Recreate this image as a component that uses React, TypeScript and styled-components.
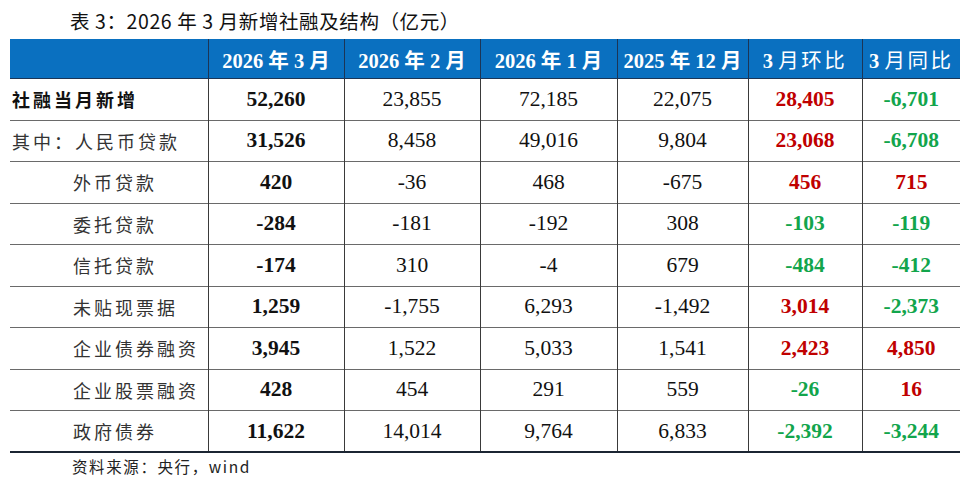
import React from "react";
import styled, { createGlobalStyle } from "styled-components";

const GlobalStyle = createGlobalStyle`
  html, body {
    margin: 0;
    padding: 0;
    background: #ffffff;
  }
`;

type Tone = "red" | "green" | "plain";

type Row = {
  label: string;
  indent?: boolean;
  strong?: boolean;
  values: string[];
  mom: [string, Tone];
  yoy: [string, Tone];
};

const rows: Row[] = [
  { label: "社融当月新增", strong: true, values: ["52,260", "23,855", "72,185", "22,075"], mom: ["28,405", "red"], yoy: ["-6,701", "green"] },
  { label: "其中：人民币贷款", values: ["31,526", "8,458", "49,016", "9,804"], mom: ["23,068", "red"], yoy: ["-6,708", "green"] },
  { label: "外币贷款", indent: true, values: ["420", "-36", "468", "-675"], mom: ["456", "red"], yoy: ["715", "red"] },
  { label: "委托贷款", indent: true, values: ["-284", "-181", "-192", "308"], mom: ["-103", "green"], yoy: ["-119", "green"] },
  { label: "信托贷款", indent: true, values: ["-174", "310", "-4", "679"], mom: ["-484", "green"], yoy: ["-412", "green"] },
  { label: "未贴现票据", indent: true, values: ["1,259", "-1,755", "6,293", "-1,492"], mom: ["3,014", "red"], yoy: ["-2,373", "green"] },
  { label: "企业债券融资", indent: true, values: ["3,945", "1,522", "5,033", "1,541"], mom: ["2,423", "red"], yoy: ["4,850", "red"] },
  { label: "企业股票融资", indent: true, values: ["428", "454", "291", "559"], mom: ["-26", "green"], yoy: ["16", "red"] },
  { label: "政府债券", indent: true, values: ["11,622", "14,014", "9,764", "6,833"], mom: ["-2,392", "green"], yoy: ["-3,244", "green"] },
];

const heads = ["2026 年 3 月", "2026 年 2 月", "2026 年 1 月", "2025 年 12 月"];
const compareHeads = ["月环比", "月同比"];
const widths = [198, 136, 136, 137, 131, 114, 98];

const Page = styled.div`
  padding: 8px 15px 0 10px;
  display: flex;
  flex-direction: column;
`;

const Title = styled.div`
  margin-left: 60px;
  height: 31px;
  font-family: "Noto Sans CJK SC", "Liberation Sans", sans-serif;
  font-size: 19.5px;
  letter-spacing: 0.6px;
  color: #111;
  line-height: 26px;
`;

const Table = styled.table`
  border-collapse: collapse;
  table-layout: fixed;
  width: 950px;
`;

const HeadCell = styled.th`
  background: #0a70c0;
  color: #ffffff;
  height: 39px;
  padding: 0;
  font-family: "Liberation Serif", "Noto Sans CJK SC", serif;
  font-weight: 700;
  font-size: 20.5px;
  text-align: center;
  border-left: 1px solid #1c3556;
  border-bottom: 1px solid #1c3556;
  white-space: nowrap;
  &:first-child {
    border-left: none;
  }
`;

const Spaced = styled.span`
  font-weight: 400;
  letter-spacing: 2.5px;
`;

const BodyRow = styled.tr`
  height: 41.5px;
  border-bottom: 1px solid #6a6a6a;
  &:last-child {
    border-bottom: 2px solid #1b2533;
  }
`;

const LabelCell = styled.td<{ $indent?: boolean; $strong?: boolean }>`
  padding: 0 0 0 ${(p) => (p.$indent ? "63px" : "2px")};
  font-family: "Noto Sans CJK SC", sans-serif;
  font-size: 18px;
  letter-spacing: 3px;
  color: ${(p) => (p.$strong ? "#111" : "#333")};
  font-weight: ${(p) => (p.$strong ? 700 : 400)};
  white-space: nowrap;
`;

const NumCell = styled.td<{ $tone?: Tone; $bold?: boolean }>`
  padding: 0;
  text-align: center;
  border-left: 1px solid #3a3a3a;
  font-family: "Liberation Serif", serif;
  font-size: 21.5px;
  font-weight: ${(p) => (p.$bold ? 700 : 400)};
  color: ${(p) =>
    p.$tone === "red" ? "#c00000" : p.$tone === "green" ? "#12a54c" : "#111"};
`;

const Source = styled.div`
  margin: 2px 0 0 62px;
  font-family: "Noto Sans CJK SC", "Liberation Sans", sans-serif;
  font-size: 15.5px;
  letter-spacing: 1.6px;
  color: #222;
`;

export default function App() {
  return (
    <>
      <GlobalStyle />
      <Page>
        <Title>表 3：2026 年 3 月新增社融及结构（亿元）</Title>
        <Table>
          <colgroup>
            {widths.map((w, i) => (
              <col key={i} style={{ width: w }} />
            ))}
          </colgroup>
          <thead>
            <tr>
              <HeadCell />
              {heads.map((h) => (
                <HeadCell key={h}>{h}</HeadCell>
              ))}
              {compareHeads.map((h) => (
                <HeadCell key={h}>
                  3 <Spaced>{h}</Spaced>
                </HeadCell>
              ))}
            </tr>
          </thead>
          <tbody>
            {rows.map((r) => (
              <BodyRow key={r.label}>
                <LabelCell $indent={r.indent} $strong={r.strong}>
                  {r.label}
                </LabelCell>
                {r.values.map((v, i) => (
                  <NumCell key={i} $bold={i === 0}>
                    {v}
                  </NumCell>
                ))}
                <NumCell $bold $tone={r.mom[1]}>
                  {r.mom[0]}
                </NumCell>
                <NumCell $bold $tone={r.yoy[1]}>
                  {r.yoy[0]}
                </NumCell>
              </BodyRow>
            ))}
          </tbody>
        </Table>
        <Source>资料来源：央行，wind</Source>
      </Page>
    </>
  );
}
